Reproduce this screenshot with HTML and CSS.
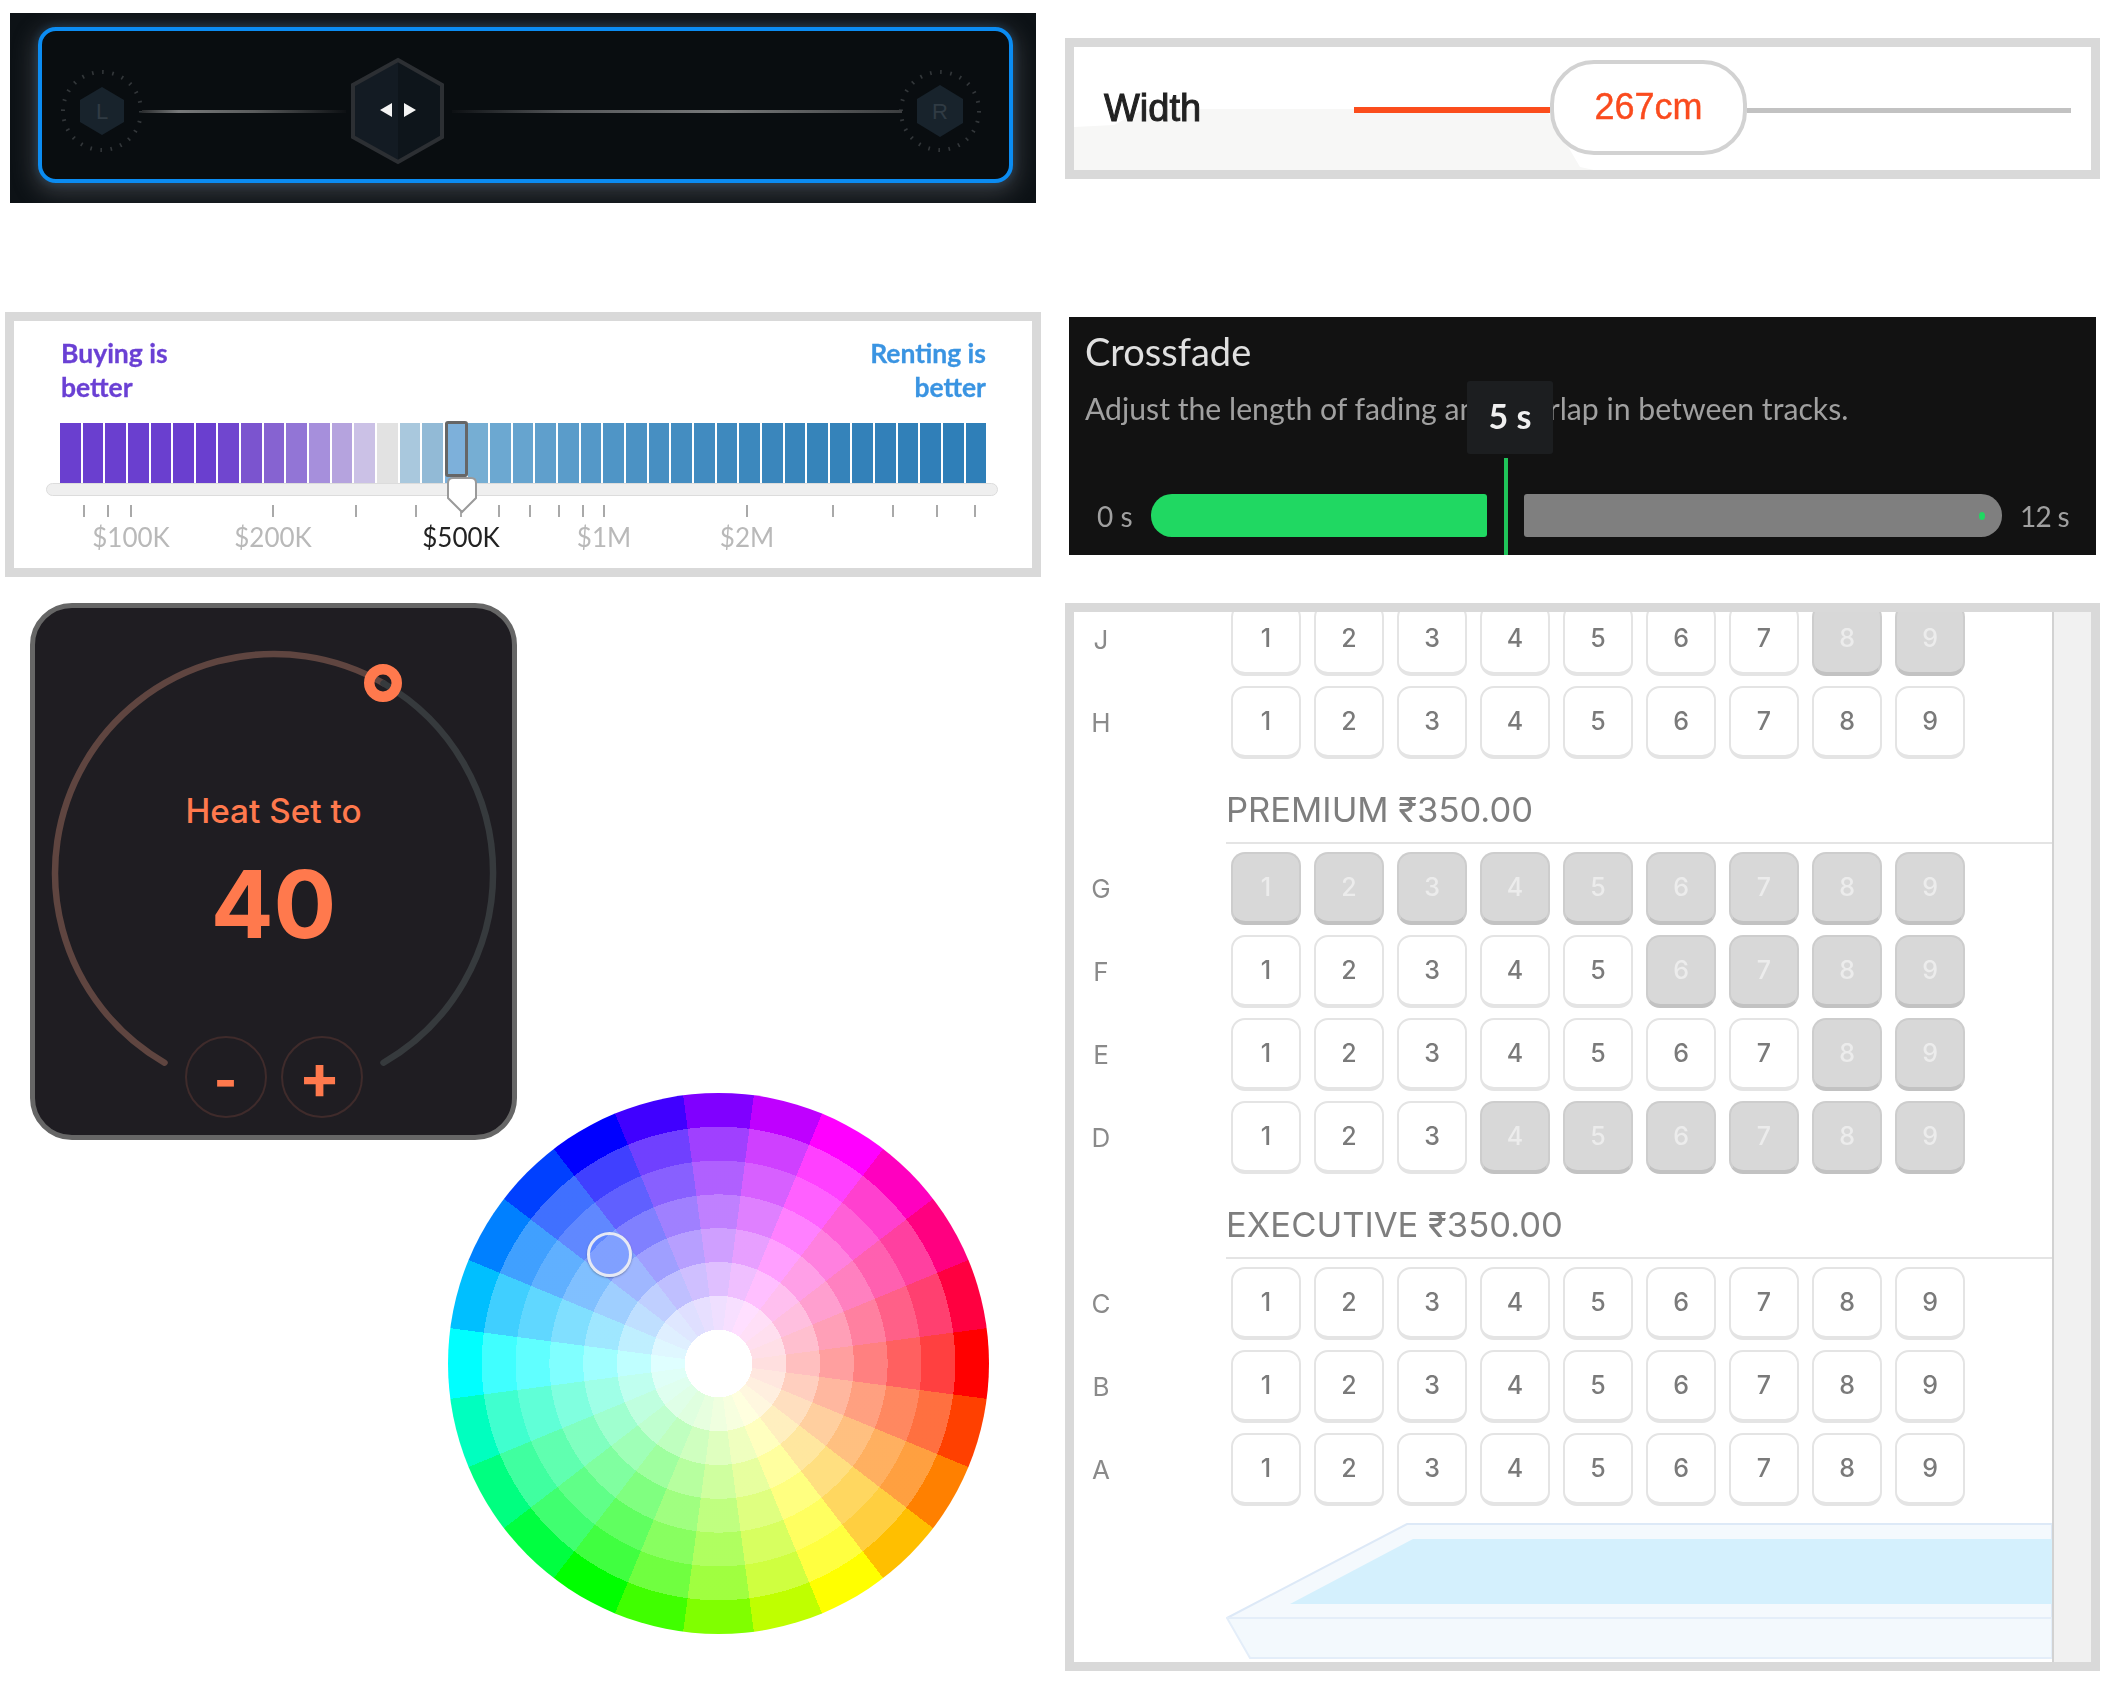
FILE: index.html
```html
<!DOCTYPE html>
<html lang="en">
<head>
<meta charset="utf-8">
<title>Slider and control gallery</title>
<link rel="stylesheet" href="styles.css">
</head>
<body>
<div class="page">
  <div class="col-left">
    <section class="balance">
      <div class="balance-frame">
        <svg class="side-knob" width="84" height="84" viewBox="0 0 84 84">
          <circle class="dots" cx="42" cy="42" r="39"/>
          <polygon class="side-hex" points="42,18 64,31 64,53 42,66 20,53 20,31"/>
          <text class="side-letter" x="42" y="50">L</text>
        </svg>
        <div class="wire wire-left"></div>
        <svg class="center-knob" width="94" height="108" viewBox="0 0 94 108">
          <polygon class="hex-left" points="47,3 47,105 2,80 2,28"/>
          <polygon class="hex-right" points="47,3 91,28 91,80 47,105"/>
          <polygon class="hex-line" points="47,3 91,28 91,80 47,105 2,80 2,28"/>
          <polygon class="arrow" points="29,53 41,46 41,60"/>
          <polygon class="arrow" points="53,46 65,53 53,60"/>
        </svg>
        <div class="wire wire-right"></div>
        <svg class="side-knob" width="84" height="84" viewBox="0 0 84 84">
          <circle class="dots" cx="42" cy="42" r="39"/>
          <polygon class="side-hex" points="42,16 65,30 65,54 42,68 19,54 19,30"/>
          <text class="side-letter" x="42" y="50">R</text>
        </svg>
      </div>
    </section>

    <section class="tile rent">
      <div class="soft">
        <div class="rent-head">
          <div class="buy-label">Buying is<br>better</div>
          <div class="rent-label">Renting is<br>better</div>
        </div>
        <div class="bars">
          <i style="background:#6a3fcf"></i><i style="background:#6a3fcf"></i><i style="background:#6a3fcf"></i><i style="background:#6a3fcf"></i><i style="background:#6a3fcf"></i><i style="background:#6a3fcf"></i><i style="background:#6a3fcf"></i><i style="background:#7046cf"></i><i style="background:#7b54cf"></i><i style="background:#8663d1"></i><i style="background:#9275d6"></i><i style="background:#a68fdc"></i><i style="background:#b5a3de"></i><i style="background:#cbc1e6"></i><i style="background:#e2e2e2"></i><i style="background:#a9c8dd"></i><i style="background:#92bad6"></i><i style="background:#7db0da"></i><i style="background:#76aed3"></i><i style="background:#6ca8d1"></i><i style="background:#66a4cf"></i><i style="background:#5f9fcc"></i><i style="background:#5a9cca"></i><i style="background:#5498c8"></i><i style="background:#4f95c6"></i><i style="background:#4b92c4"></i><i style="background:#478fc2"></i><i style="background:#448dc1"></i><i style="background:#418bc0"></i><i style="background:#3e89be"></i><i style="background:#3c88bd"></i><i style="background:#3a86bc"></i><i style="background:#3885bb"></i><i style="background:#3684ba"></i><i style="background:#3583ba"></i><i style="background:#3381b9"></i><i style="background:#3280b9"></i><i style="background:#3180b8"></i><i style="background:#307fb8"></i><i style="background:#2f7fb8"></i><i style="background:#2f7fb8"></i>
          <div class="bar-pick"></div>
        </div>
        <div class="rent-track"></div>
        <div class="scale">
          <b style="left:70px"></b><b style="left:94px"></b><b style="left:117px"></b><b style="left:259px"></b><b style="left:342px"></b><b style="left:402px"></b><b style="left:447px"></b><b style="left:485px"></b><b style="left:516px"></b><b style="left:545px"></b><b style="left:569px"></b><b style="left:590px"></b><b style="left:733px"></b><b style="left:819px"></b><b style="left:879px"></b><b style="left:923px"></b><b style="left:961px"></b>
          <span style="left:117px">$100K</span><span style="left:259px">$200K</span><span class="now" style="left:447px">$500K</span><span style="left:590px">$1M</span><span style="left:733px">$2M</span>
          <svg class="pointer" width="32" height="38" viewBox="0 0 32 38"><path d="M2 7 Q2 2 7 2 H25 Q30 2 30 7 V22 L16 36 L2 22 Z"/></svg>
        </div>
      </div>
    </section>

    <div class="lower">
      <section class="thermo">
        <svg class="thermo-ring" width="477" height="527" viewBox="0 0 477 527">
          <path class="arc-warm" d="M129.5 454.7 A219 219 0 0 1 348.5 75.3"/>
          <path class="arc-cold" d="M348.5 75.3 A219 219 0 0 1 348.5 454.7"/>
          <circle class="arc-knob" cx="348" cy="75" r="13.75"/>
        </svg>
        <div class="thermo-title">Heat Set to</div>
        <div class="thermo-value">40</div>
        <div class="thermo-buttons">
          <div class="round-btn">-</div>
          <div class="round-btn round-plus">+</div>
        </div>
      </section>
      <div class="wheel"><div class="wheel-handle"></div></div>
    </div>
  </div>

  <div class="col-right">
    <section class="tile width-tile">
      <div class="width-shade"></div>
      <div class="width-row soft">
        <div class="width-label">Width</div>
        <div class="width-fill"></div>
        <div class="width-thumb">267cm</div>
        <div class="width-rest"></div>
      </div>
    </section>

    <section class="fade">
      <div class="fade-title soft">Crossfade</div>
      <div class="fade-text soft">Adjust the length of fading and overlap in between tracks.</div>
      <div class="fade-tip"><span class="soft">5 s</span></div>
      <div class="fade-row soft">
        <span class="fade-end">0 s</span>
        <div class="fade-on"></div>
        <div class="fade-off"><i></i></div>
        <span class="fade-end fade-max">12 s</span>
      </div>
      <div class="fade-mark"></div>
    </section>

    <section class="tile seats">
      <div class="seat-main soft">
        <div class="row first"><span class="row-name">J</span><div class="row-seats"><span>1</span><span>2</span><span>3</span><span>4</span><span>5</span><span>6</span><span>7</span><span class="off">8</span><span class="off">9</span></div></div>
        <div class="row"><span class="row-name">H</span><div class="row-seats"><span>1</span><span>2</span><span>3</span><span>4</span><span>5</span><span>6</span><span>7</span><span>8</span><span>9</span></div></div>
        <div class="tier"><span>PREMIUM ₹350.00</span></div>
        <div class="row"><span class="row-name">G</span><div class="row-seats"><span class="off">1</span><span class="off">2</span><span class="off">3</span><span class="off">4</span><span class="off">5</span><span class="off">6</span><span class="off">7</span><span class="off">8</span><span class="off">9</span></div></div>
        <div class="row"><span class="row-name">F</span><div class="row-seats"><span>1</span><span>2</span><span>3</span><span>4</span><span>5</span><span class="off">6</span><span class="off">7</span><span class="off">8</span><span class="off">9</span></div></div>
        <div class="row"><span class="row-name">E</span><div class="row-seats"><span>1</span><span>2</span><span>3</span><span>4</span><span>5</span><span>6</span><span>7</span><span class="off">8</span><span class="off">9</span></div></div>
        <div class="row"><span class="row-name">D</span><div class="row-seats"><span>1</span><span>2</span><span>3</span><span class="off">4</span><span class="off">5</span><span class="off">6</span><span class="off">7</span><span class="off">8</span><span class="off">9</span></div></div>
        <div class="tier"><span>EXECUTIVE ₹350.00</span></div>
        <div class="row"><span class="row-name">C</span><div class="row-seats"><span>1</span><span>2</span><span>3</span><span>4</span><span>5</span><span>6</span><span>7</span><span>8</span><span>9</span></div></div>
        <div class="row"><span class="row-name">B</span><div class="row-seats"><span>1</span><span>2</span><span>3</span><span>4</span><span>5</span><span>6</span><span>7</span><span>8</span><span>9</span></div></div>
        <div class="row"><span class="row-name">A</span><div class="row-seats"><span>1</span><span>2</span><span>3</span><span>4</span><span>5</span><span>6</span><span>7</span><span>8</span><span>9</span></div></div>
        <svg class="screen" width="826" height="142" viewBox="0 0 826 142">
          <path class="screen-top" d="M181 3 H826 V97 H1 Z"/>
          <path class="screen-front" d="M1 97 H826 V137 H24 Z"/>
          <path class="screen-glass" d="M187 18 H826 V83 H64 Z"/>
        </svg>
      </div>
      <div class="seat-scroll"></div>
    </section>
  </div>
</div>
</body>
</html>
```
FILE: styles.css
```css
* { box-sizing: border-box; }

html, body { margin: 0; background: #fff; }

.page {
  display: flex;
  width: 2105px;
  height: 1684px;
  overflow: hidden;
  font-family: "Inter", "Liberation Sans", sans-serif;
}

.col-left { width: 1065px; flex: none; }
.col-right { width: 1040px; flex: none; }

.soft { filter: blur(0.6px); }

.tile { border: 9px solid #d9d9d9; background: #fff; }

/* balance widget */
.balance {
  width: 1026px;
  height: 190px;
  margin: 13px 0 0 10px;
  padding: 14px 0 0 28px;
  background: #0d1216;
  overflow: hidden;
}

.balance-frame {
  display: flex;
  align-items: center;
  width: 975px;
  height: 156px;
  padding: 12px 0 0 18px;
  background: #090d10;
  border: 4px solid #0b8cf2;
  border-radius: 18px;
  box-shadow: 0 6px 22px 4px rgba(120, 120, 125, 0.4), 0 0 10px rgba(11, 140, 242, 0.25);
}

.side-knob, .center-knob { flex: none; display: block; }
.dots { fill: none; stroke: #33373a; stroke-width: 4; stroke-dasharray: 1.6 8.6; }
.side-hex { fill: #18232c; }
.side-letter { fill: #303b44; font: 22px "Liberation Sans", sans-serif; text-anchor: middle; }
.hex-left { fill: #131b23; }
.hex-right { fill: #0e151b; }
.hex-line { fill: none; stroke: #2c2f33; stroke-width: 4; }
.arrow { fill: #f4f4f4; }

.wire {
  flex: none;
  height: 3px;
  background: linear-gradient(90deg, #2a2c2e, #77797a 18%, #5a5c5d 55%, #0d1013);
  filter: blur(0.7px);
}
.wire-left { width: 204px; margin: 0 5px 0 -2px; }
.wire-right {
  width: 450px;
  margin: 0 -4px 0 7px;
  background: linear-gradient(90deg, #0d1013, #55575a 25%, #77797a 60%, #3c3e40);
}

/* rent vs buy */
.rent {
  width: 1036px;
  height: 265px;
  margin: 109px 0 0 5px;
  font-family: "Lato", "Liberation Sans", sans-serif;
}

.rent-head {
  display: flex;
  justify-content: space-between;
  padding: 15px 46px 0 47px;
  height: 83px;
  font-size: 26.5px;
  font-weight: 700;
  line-height: 34px;
}
.buy-label { color: #6a40d4; -webkit-text-stroke: 0.3px #6a40d4; }
.rent-label { color: #3a94e2; text-align: right; -webkit-text-stroke: 0.3px #3a94e2; }

.bars {
  position: relative;
  display: flex;
  gap: 2px;
  height: 60px;
  margin: 19px 46px 0;
}
.bars i { flex: 1; }

.bar-pick {
  position: absolute;
  left: 385px;
  top: -2px;
  width: 23px;
  height: 56px;
  border: 3px solid #666;
  border-radius: 3px;
}

.rent-track {
  height: 13px;
  margin: 0 34px 0 32px;
  background: #efefef;
  border: 1px solid #dcdcdc;
  border-radius: 7px;
}

.scale {
  position: relative;
  height: 71px;
  color: #b9b9b9;
  font-size: 26px;
}
.scale b {
  position: absolute;
  top: 9px;
  width: 2px;
  height: 12px;
  margin-left: -1px;
  background: #a9a9a9;
}
.scale span {
  position: absolute;
  top: 26px;
  line-height: 30px;
  transform: translateX(-50%);
}
.scale .now { color: #222; }

.pointer {
  position: absolute;
  left: 432px;
  top: -20px;
  fill: #fff;
  stroke: #9a9a9a;
  stroke-width: 2;
}

/* thermostat */
.lower {
  display: flex;
  align-items: flex-start;
  margin-top: 26px;
}

.thermo {
  position: relative;
  flex: none;
  width: 487px;
  height: 537px;
  margin-left: 30px;
  padding-top: 183px;
  background: #1f1d22;
  border: 5px solid #666;
  border-radius: 42px;
  color: #ff794d;
  text-align: center;
}

.thermo-ring { position: absolute; left: 0; top: 0; fill: none; stroke-width: 6.5; }
.arc-warm { stroke: #5f4540; }
.arc-cold { stroke: #363a3d; }
.arc-warm, .arc-cold { stroke-linecap: round; }
.arc-knob { stroke: #ff794d; stroke-width: 10.5; }

.thermo-title { font-size: 33.3px; font-weight: 500; line-height: 40px; }
.thermo-value { margin-top: 23px; font-size: 93px; font-weight: 700; line-height: 100px; }

.thermo-buttons {
  display: flex;
  justify-content: center;
  gap: 14px;
  margin-top: 82px;
}

.round-btn {
  display: flex;
  align-items: center;
  justify-content: center;
  width: 82px;
  height: 82px;
  padding-top: 5px;
  border: 2px solid #3f2b2b;
  border-radius: 50%;
  font-size: 50px;
  font-weight: 800;
  line-height: 1;
}
.round-plus { padding: 0 4px 0 0; font-size: 62px; font-weight: 700; }

/* colour wheel */
.wheel {
  position: relative;
  flex: none;
  width: 541px;
  height: 541px;
  margin: 490px 0 0 -69px;
  border-radius: 50%;
  background:
    radial-gradient(circle closest-side,
      #fff 0 12.5%,
      rgba(255,255,255,.875) 12.5% 25%,
      rgba(255,255,255,.75) 25% 37.5%,
      rgba(255,255,255,.625) 37.5% 50%,
      rgba(255,255,255,.5) 50% 62.5%,
      rgba(255,255,255,.375) 62.5% 75%,
      rgba(255,255,255,.25) 75% 87.5%,
      transparent 87.5%),
    conic-gradient(from 82.5deg,
      #ff0000 0 15deg, #ff4000 0 30deg, #ff8000 0 45deg, #ffbf00 0 60deg,
      #ffff00 0 75deg, #bfff00 0 90deg, #80ff00 0 105deg, #40ff00 0 120deg,
      #00ff00 0 135deg, #00ff40 0 150deg, #00ff80 0 165deg, #00ffbf 0 180deg,
      #00ffff 0 195deg, #00bfff 0 210deg, #0080ff 0 225deg, #0040ff 0 240deg,
      #0000ff 0 255deg, #4000ff 0 270deg, #8000ff 0 285deg, #bf00ff 0 300deg,
      #ff00ff 0 315deg, #ff00bf 0 330deg, #ff0080 0 345deg, #ff0040 0 360deg);
}

.wheel-handle {
  position: absolute;
  left: 139px;
  top: 139px;
  width: 45px;
  height: 45px;
  border: 3px solid #e6e9f4;
  border-radius: 50%;
  box-shadow: 0 1px 2px rgba(60, 70, 90, 0.5);
}

/* width slider */
.width-tile {
  position: relative;
  width: 1035px;
  height: 141px;
  margin-top: 38px;
  overflow: hidden;
}

.width-shade {
  position: absolute;
  left: 0;
  top: 0;
  width: 520px;
  height: 123px;
  background: #f7f7f6;
  clip-path: polygon(0 80px, 40px 78px, 70px 62px, 472px 62px, 506px 120px, 520px 123px, 0 123px);
}

.width-row {
  position: relative;
  display: flex;
  align-items: center;
  height: 123px;
  padding-left: 30px;
}

.width-label {
  width: 250px;
  font-family: "Liberation Sans", sans-serif;
  font-size: 38px;
  color: #222;
  -webkit-text-stroke: 1px #222;
}

.width-fill { width: 196px; height: 6px; margin-top: 3px; background: #fb4d1c; }
.width-rest { width: 324px; height: 5px; margin-top: 3px; background: #c2c2c2; }

.width-thumb {
  width: 197px;
  height: 95px;
  display: flex;
  align-items: center;
  justify-content: center;
  margin-top: -3px;
  background: #fff;
  border: 4px solid #d2d2d2;
  border-radius: 44px;
  color: #fa4b1e;
  font-family: "Liberation Sans", sans-serif;
  font-size: 36px;
  -webkit-text-stroke: 0.4px #fa4b1e;
}

/* crossfade */
.fade {
  position: relative;
  width: 1027px;
  height: 238px;
  margin: 138px 0 0 4px;
  padding: 12px 0 0 16px;
  background: #121212;
  font-family: "Lato", "Liberation Sans", sans-serif;
}

.fade-title { color: #e0e0e0; font-size: 38px; line-height: 44px; }
.fade-text { margin-top: 17px; color: #a0a0a0; font-size: 30.2px; line-height: 36px; }

.fade-tip {
  position: absolute;
  left: 398px;
  top: 64px;
  display: flex;
  align-items: center;
  justify-content: center;
  width: 86px;
  height: 73px;
  padding-bottom: 4px;
  background: #1c1e20;
  border-radius: 3px;
  color: #f0f0f0;
  font-size: 34px;
  font-weight: 700;
}

.fade-row {
  display: flex;
  align-items: center;
  height: 43px;
  margin: 68px 0 0 12px;
}
.fade-end { width: 37px; color: #a0a0a0; font-size: 28px; white-space: nowrap; }
.fade-on {
  width: 336px;
  height: 43px;
  margin-left: 17px;
  background: #20d862;
  border-radius: 21px 3px 3px 21px;
}
.fade-off {
  display: flex;
  align-items: center;
  justify-content: flex-end;
  width: 478px;
  height: 43px;
  margin-left: 37px;
  padding-right: 17px;
  background: #7f7f7f;
  border-radius: 3px 21px 21px 3px;
}
.fade-off i { width: 6px; height: 8px; border-radius: 50%; background: #20d862; }
.fade-max { margin-left: 18px; letter-spacing: -0.7px; }

.fade-mark {
  position: absolute;
  left: 435px;
  top: 141px;
  width: 4px;
  height: 97px;
  background: #20c45a;
}

/* seats */
.seats {
  display: flex;
  width: 1035px;
  height: 1068px;
  margin: 48px 0 0 0;
  overflow: hidden;
}

.seat-main {
  flex: none;
  width: 978px;
  height: 1050px;
  overflow: hidden;
  color: #7a7a7a;
  font-size: 25px;
  font-weight: 500;
}

.seat-scroll {
  flex: 1;
  background: #f1f1f1;
  border-left: 2px solid #d2d2d2;
}

.row { display: flex; align-items: center; height: 83px; }
.row.first { margin-top: -16px; }

.row-name { width: 54px; margin-top: 4px; text-align: center; font-size: 26px; font-weight: 400; color: #8a8a8a; }

.row-seats { display: flex; gap: 13px; margin-left: 103px; }
.row-seats span {
  display: flex;
  align-items: center;
  justify-content: center;
  width: 70px;
  height: 73px;
  margin-top: 3px;
  border: 2px solid #e4e4e4;
  border-bottom-width: 4px;
  border-radius: 14px;
}
.row-seats .off {
  background: #d8d8d8;
  border-color: #cdcdcd;
  border-bottom-color: #c2c2c2;
  color: #ececec;
}

.tier {
  height: 83px;
  margin-left: 152px;
  padding-top: 27px;
  font-size: 34.6px;
  font-weight: 400;
  line-height: 40px;
  color: #7e7e7e;
  position: relative;
}
.tier::after {
  content: "";
  position: absolute;
  left: 0;
  right: 0;
  top: 80px;
  height: 2px;
  background: #e4e4e4;
}

.screen { display: block; margin: 12px 0 0 152px; stroke-width: 2; }
.screen-top { fill: #f4f9fd; stroke: #dde9f7; }
.screen-front { fill: #f3f9fd; stroke: #e4eef9; }
.screen-glass { fill: #d4f0fd; }
```
